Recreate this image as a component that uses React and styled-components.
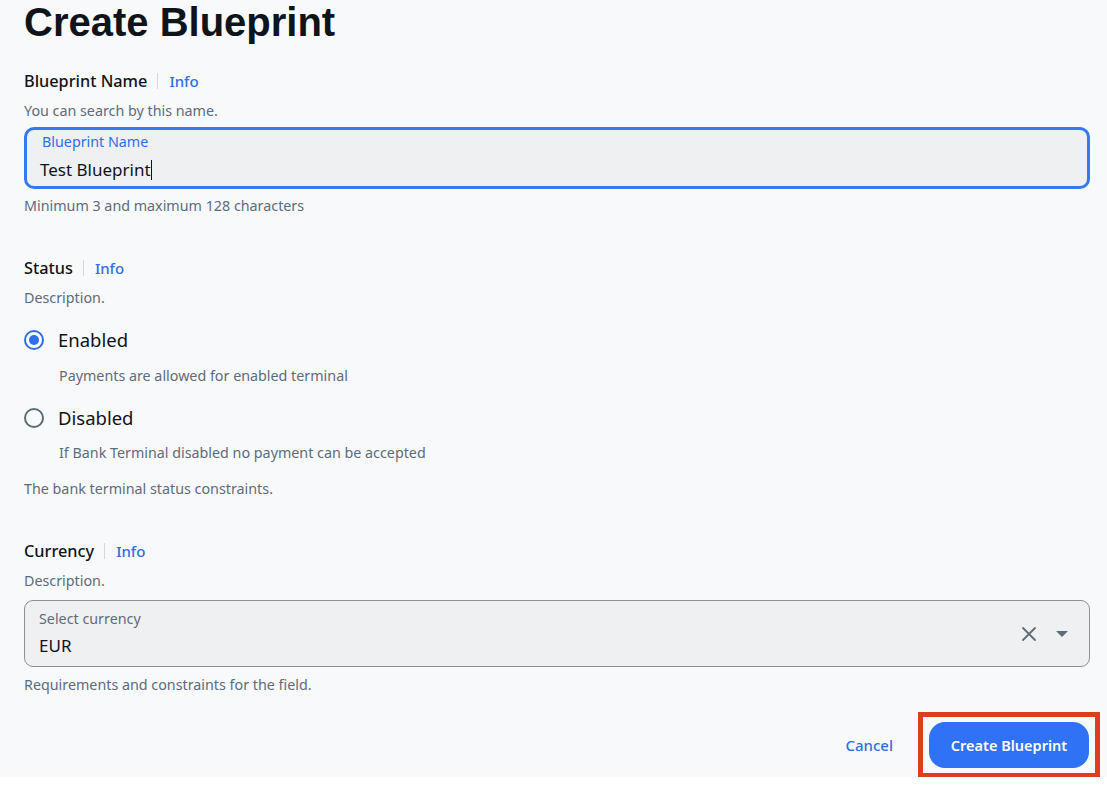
import styled, {createGlobalStyle} from "styled-components";

const GlobalStyle = createGlobalStyle`
  body {
    margin: 0;
    background: #ffffff;
    font-family: "Noto Sans", "Open Sans", sans-serif;
    color: #0f141a;
  }
`;

const Page = styled.div`
  background: #f8f9fb;
  height: 777px;
  padding: 0 18px 0 24px;
  box-sizing: border-box;
  overflow: hidden;
`;

const Title = styled.h1`
  margin: 0;
  font-family: "Liberation Sans", Arial, sans-serif;
  font-size: 40px;
  line-height: 44px;
  font-weight: 700;
  color: #0f141a;
`;

const Section = styled.section`
  margin-top: ${props => props.first ? "25px" : "40px"};
`;

const LabelRow = styled.div`
  display: flex;
  align-items: center;
  height: 24px;
  font-size: 16.3px;
  font-weight: 500;
`;

const Divider = styled.span`
  width: 1px;
  height: 16px;
  background: #d5d8dd;
  margin: 0 11px 0 10px;
`;

const InfoLink = styled.a`
  color: #2f6ee5;
  font-size: 15px;
  font-weight: 500;
  text-decoration: none;
`;

const Description = styled.p`
  margin: 8px 0 0;
  font-size: 14.3px;
  line-height: 20px;
  color: #5f6b7a;
`;

const Hint = styled.p`
  margin: ${props => props.mt || "7px"} 0 0;
  font-size: 14.3px;
  line-height: 20px;
  color: #5f6b7a;
`;

const FieldBox = styled.div`
  margin-top: ${props => props.mt || "6px"};
  box-sizing: border-box;
  width: 1066px;
  height: ${props => props.h}px;
  background: #eff0f2;
  border: ${props => props.focused ? "3px solid #3479ef" : "1px solid #8d9096"};
  border-radius: ${props => props.focused ? "10px" : "9px"};
  padding: ${props => props.focused ? "2px 14px 0 13px" : "8px 21px 0 14px"};
  display: flex;
  align-items: flex-start;
`;

const FieldText = styled.div`
  flex: 1;
`;

const FloatLabel = styled.div`
  font-size: 14.3px;
  line-height: 20px;
  color: ${props => props.active ? "#2f6ee5" : "#5f6b7a"};
  padding-left: ${props => props.active ? "2px" : "0"};
`;

const Value = styled.div`
  margin-top: ${props => props.mt || "4px"};
  font-size: 17px;
  line-height: 26px;
  color: #0f141a;
  display: flex;
  align-items: center;
`;

const Caret = styled.span`
  display: inline-block;
  width: 1px;
  height: 20px;
  background: #0f141a;
`;

const Icons = styled.div`
  align-self: center;
  display: flex;
  align-items: center;
  gap: 19px;
  margin-top: -8px;
  color: #5f6b7a;
`;

const RadioRow = styled.label`
  display: flex;
  align-items: center;
  margin-top: 18px;
  height: 28px;
  font-size: 18.5px;
  line-height: 28px;
  color: #0f141a;
`;

const RadioCircle = styled.span`
  box-sizing: border-box;
  width: 20px;
  height: 20px;
  border-radius: 50%;
  border: 2px solid ${props => props.checked ? "#2f6ee5" : "#5f6b7a"};
  display: flex;
  align-items: center;
  justify-content: center;
  margin-right: 14px;
  &::after {
    content: "";
    width: 10px;
    height: 10px;
    border-radius: 50%;
    background: ${props => props.checked ? "#2f6ee5" : "transparent"};
  }
`;

const RadioDesc = styled.div`
  margin: ${props => props.mt} 0 0 35px;
  font-size: 14.3px;
  line-height: 20px;
  color: #5f6b7a;
`;

const Footer = styled.div`
  margin-top: 17px;
  display: flex;
  justify-content: flex-end;
  align-items: center;
  margin-right: -11px;
`;

const CancelButton = styled.button`
  background: none;
  border: none;
  font-family: inherit;
  font-size: 15px;
  font-weight: 500;
  color: #2f6ee5;
  margin-right: 25px;
  padding: 0;
`;

const Highlight = styled.div`
  border: 5px solid #dc3e1f;
  padding: 5px 6px;
`;

const PrimaryButton = styled.button`
  width: 160px;
  height: 46px;
  border: none;
  border-radius: 16px;
  background: #2f72f6;
  color: #ffffff;
  font-family: inherit;
  font-size: 14.5px;
  font-weight: 600;
`;

const FieldHeader = ({label}) => (
    <LabelRow>
        {label}
        <Divider/>
        <InfoLink>Info</InfoLink>
    </LabelRow>
)

const App = () => {
    return (
        <Page>
            <GlobalStyle/>
            <Title>Create Blueprint</Title>

            <Section first>
                <FieldHeader label="Blueprint Name"/>
                <Description>You can search by this name.</Description>
                <FieldBox focused h={62}>
                    <FieldText>
                        <FloatLabel active>Blueprint Name</FloatLabel>
                        <Value mt="5px">Test Blueprint<Caret/></Value>
                    </FieldText>
                </FieldBox>
                <Hint>Minimum 3 and maximum 128 characters</Hint>
            </Section>

            <Section>
                <FieldHeader label="Status"/>
                <Description>Description.</Description>
                <RadioRow>
                    <RadioCircle checked/>
                    Enabled
                </RadioRow>
                <RadioDesc mt="12px">Payments are allowed for enabled terminal</RadioDesc>
                <RadioRow>
                    <RadioCircle/>
                    Disabled
                </RadioRow>
                <RadioDesc mt="11px">If Bank Terminal disabled no payment can be accepted</RadioDesc>
                <Hint mt="16px">The bank terminal status constraints.</Hint>
            </Section>

            <Section>
                <FieldHeader label="Currency"/>
                <Description>Description.</Description>
                <FieldBox h={67} mt="9px">
                    <FieldText>
                        <FloatLabel>Select currency</FloatLabel>
                        <Value>EUR</Value>
                    </FieldText>
                    <Icons>
                        <svg width="16" height="16" viewBox="0 0 16 16" fill="none" stroke="currentColor" strokeWidth="1.8" strokeLinecap="round">
                            <path d="M2 2l12 12M14 2L2 14"/>
                        </svg>
                        <svg width="12" height="6" viewBox="0 0 12 6" fill="currentColor">
                            <path d="M0 0h12L6 6z"/>
                        </svg>
                    </Icons>
                </FieldBox>
                <Hint mt="8px">Requirements and constraints for the field.</Hint>
            </Section>

            <Footer>
                <CancelButton>Cancel</CancelButton>
                <Highlight>
                    <PrimaryButton>Create Blueprint</PrimaryButton>
                </Highlight>
            </Footer>
        </Page>
    )
}

export default App
